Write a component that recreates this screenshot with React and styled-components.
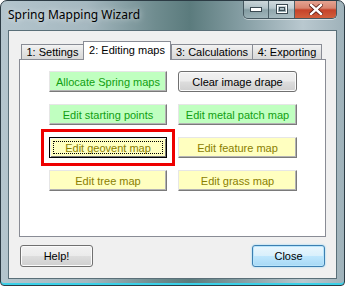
import React from 'react'
import styled, { createGlobalStyle, css } from 'styled-components'

const GlobalStyle = createGlobalStyle`
  body {
    margin: 0;
    background: #ffffff;
  }
`

const Window = styled.div`
  width: 345px;
  height: 286px;
  box-sizing: border-box;
  border: 1px solid #2c3b44;
  border-radius: 7px 7px 4px 4px;
  overflow: hidden;
  display: flex;
  flex-direction: column;
  background: linear-gradient(
    to right,
    #b4c5cd 0%,
    #a5b8c0 25%,
    #6f8c8f 45%,
    #5b7b7d 55%,
    #8aa2a8 72%,
    #b9c8cf 88%,
    #9fb2ba 100%
  );
  box-shadow: inset 0 -2px 0 #3ad0e8;
`

const TitleBar = styled.div`
  height: 29px;
  flex-shrink: 0;
  display: flex;
  align-items: flex-start;
  justify-content: space-between;
`

const Title = styled.div`
  padding: 5px 0 0 7px;
  font-family: 'Noto Sans', 'Open Sans', sans-serif;
  font-size: 12px;
  color: #000;
  text-shadow: 0 0 6px rgba(255, 255, 255, 0.8);
`

const CaptionGroup = styled.div`
  display: flex;
  margin-right: 7px;
  margin-top: -1px;
  border: 1px solid #45575f;
  border-top: none;
  border-radius: 0 0 5px 5px;
  overflow: hidden;
  box-shadow: 0 1px 0 rgba(255, 255, 255, 0.5);
`

const CaptionButton = styled.div`
  width: ${(p) => p.$w}px;
  height: 18px;
  display: flex;
  align-items: center;
  justify-content: center;
  background: ${(p) =>
    p.$close
      ? 'linear-gradient(#e7a796 0%, #d88570 45%, #c6432a 55%, #d25f3c 100%)'
      : 'linear-gradient(rgba(255,255,255,0.55) 0%, rgba(220,230,235,0.4) 45%, rgba(120,145,150,0.35) 55%, rgba(170,190,195,0.5) 100%)'};
  & + & {
    border-left: 1px solid #4d6068;
  }
`

const Client = styled.div`
  flex: 1;
  margin: 0 7px 6px 7px;
  border: 1px solid #5a6f78;
  background: #f0f0f0;
  padding: 10px;
  display: flex;
  flex-direction: column;
  font-family: 'Liberation Sans', Arial, sans-serif;
  font-size: 11px;
`

const TabStrip = styled.div`
  display: flex;
  align-items: flex-end;
  height: 18px;
  padding-left: 2px;
`

const Tab = styled.div`
  box-sizing: border-box;
  width: ${(p) => p.$w}px;
  margin-left: ${(p) => p.$ml || 0}px;
  height: 15px;
  border: 1px solid #898c95;
  border-bottom: none;
  background: linear-gradient(#f3f3f3, #e3e3e3 50%, #d8d8d8);
  color: #000;
  display: flex;
  align-items: center;
  justify-content: center;
  white-space: nowrap;
  ${(p) =>
    p.$active &&
    css`
      height: 19px;
      margin-bottom: -1px;
      background: #ffffff;
      position: relative;
      z-index: 1;
      padding-bottom: 2px;
    `}
`

const Panel = styled.div`
  height: 178px;
  box-sizing: border-box;
  border: 1px solid #898c95;
  background: #ffffff;
  padding: 11px 0 0 29px;
`

const ButtonGrid = styled.div`
  display: grid;
  grid-template-columns: 118px 119px;
  column-gap: 11px;
  row-gap: 12px;
`

const palette = {
  green: { bg: '#c0ffc0', fg: '#10a010' },
  yellow: { bg: '#ffffc0', fg: '#8a8000' },
}

const ColorButton = styled.div`
  box-sizing: border-box;
  height: 21px;
  display: flex;
  align-items: center;
  justify-content: center;
  background: ${(p) => palette[p.$tone].bg};
  color: ${(p) => palette[p.$tone].fg};
  border-top: 1px solid #e6e6e6;
  border-left: 1px solid #e6e6e6;
  border-right: 1px solid #7a7a7a;
  border-bottom: 1px solid #7a7a7a;
  box-shadow: inset -1px -1px 0 #b4b4b4;
  ${(p) =>
    p.$focused &&
    css`
      border: 1px solid #000;
      box-shadow: inset 1px 1px 0 #f4f4f4, inset -1px -1px 0 #7a7a7a;
      outline: 3px solid #ee0000;
      outline-offset: 5px;
      position: relative;
      &::after {
        content: '';
        position: absolute;
        inset: 3px;
        border: 1px dotted #000;
      }
    `}
`

const VistaButton = styled.div`
  box-sizing: border-box;
  width: ${(p) => p.$w}px;
  height: ${(p) => p.$h}px;
  display: flex;
  align-items: center;
  justify-content: center;
  color: #000;
  border: 1px solid #707070;
  border-radius: 3px;
  background: linear-gradient(#f2f2f2 0%, #ebebeb 48%, #dddddd 52%, #cfcfcf 100%);
  box-shadow: inset 0 0 0 1px #fbfbfb;
  ${(p) =>
    p.$default &&
    css`
      border-color: #3c7fb1;
      background: linear-gradient(#eaf6fd 0%, #d9f0fc 48%, #bee6fd 52%, #a7d9f5 100%);
      box-shadow: inset 0 0 0 1px #b8e4fb, 0 0 2px #7fd0f5;
    `}
`

const Footer = styled.div`
  margin-top: 8px;
  padding: 0 1px;
  display: flex;
  justify-content: space-between;
`

const tabs = [
  { label: '1: Settings', w: 63 },
  { label: '2: Editing maps', w: 88, ml: -1, active: true },
  { label: '3: Calculations', w: 82 },
  { label: '4: Exporting', w: 70, ml: -1 },
]

const mapButtons = [
  { label: 'Allocate Spring maps', tone: 'green' },
  { label: 'Clear image drape', vista: true },
  { label: 'Edit starting points', tone: 'green' },
  { label: 'Edit metal patch map', tone: 'green' },
  { label: 'Edit geovent map', tone: 'yellow', focused: true },
  { label: 'Edit feature map', tone: 'yellow' },
  { label: 'Edit tree map', tone: 'yellow' },
  { label: 'Edit grass map', tone: 'yellow' },
]

function CaptionButtons() {
  return (
    <CaptionGroup>
      <CaptionButton $w={24}>
        <svg width="12" height="5" viewBox="0 0 12 5">
          <rect x="0.5" y="0.5" width="11" height="4" fill="#fff" stroke="#3b4a52" />
        </svg>
      </CaptionButton>
      <CaptionButton $w={25}>
        <svg width="12" height="10" viewBox="0 0 12 10">
          <rect x="0.5" y="0.5" width="11" height="9" fill="none" stroke="#3b4a52" />
          <rect x="1.5" y="1.5" width="9" height="7" fill="none" stroke="#fff" />
          <rect x="3.5" y="3.5" width="5" height="3" fill="none" stroke="#3b4a52" />
        </svg>
      </CaptionButton>
      <CaptionButton $w={41} $close>
        <svg width="14" height="11" viewBox="0 0 14 11">
          <path d="M2 1 L12 10 M12 1 L2 10" stroke="#5a1a10" strokeWidth="4" strokeLinecap="square" />
          <path d="M2 1 L12 10 M12 1 L2 10" stroke="#ffffff" strokeWidth="2.4" strokeLinecap="square" />
        </svg>
      </CaptionButton>
    </CaptionGroup>
  )
}

export default function App() {
  return (
    <>
      <GlobalStyle />
      <Window>
        <TitleBar>
          <Title>Spring Mapping Wizard</Title>
          <CaptionButtons />
        </TitleBar>
        <Client>
          <TabStrip>
            {tabs.map((t) => (
              <Tab key={t.label} $w={t.w} $ml={t.ml} $active={t.active}>
                {t.label}
              </Tab>
            ))}
          </TabStrip>
          <Panel>
            <ButtonGrid>
              {mapButtons.map((b) =>
                b.vista ? (
                  <VistaButton key={b.label} $w={119} $h={21}>
                    {b.label}
                  </VistaButton>
                ) : (
                  <ColorButton key={b.label} $tone={b.tone} $focused={b.focused}>
                    {b.label}
                  </ColorButton>
                )
              )}
            </ButtonGrid>
          </Panel>
          <Footer>
            <VistaButton $w={73} $h={22}>Help!</VistaButton>
            <VistaButton $w={73} $h={22} $default>
              Close
            </VistaButton>
          </Footer>
        </Client>
      </Window>
    </>
  )
}
